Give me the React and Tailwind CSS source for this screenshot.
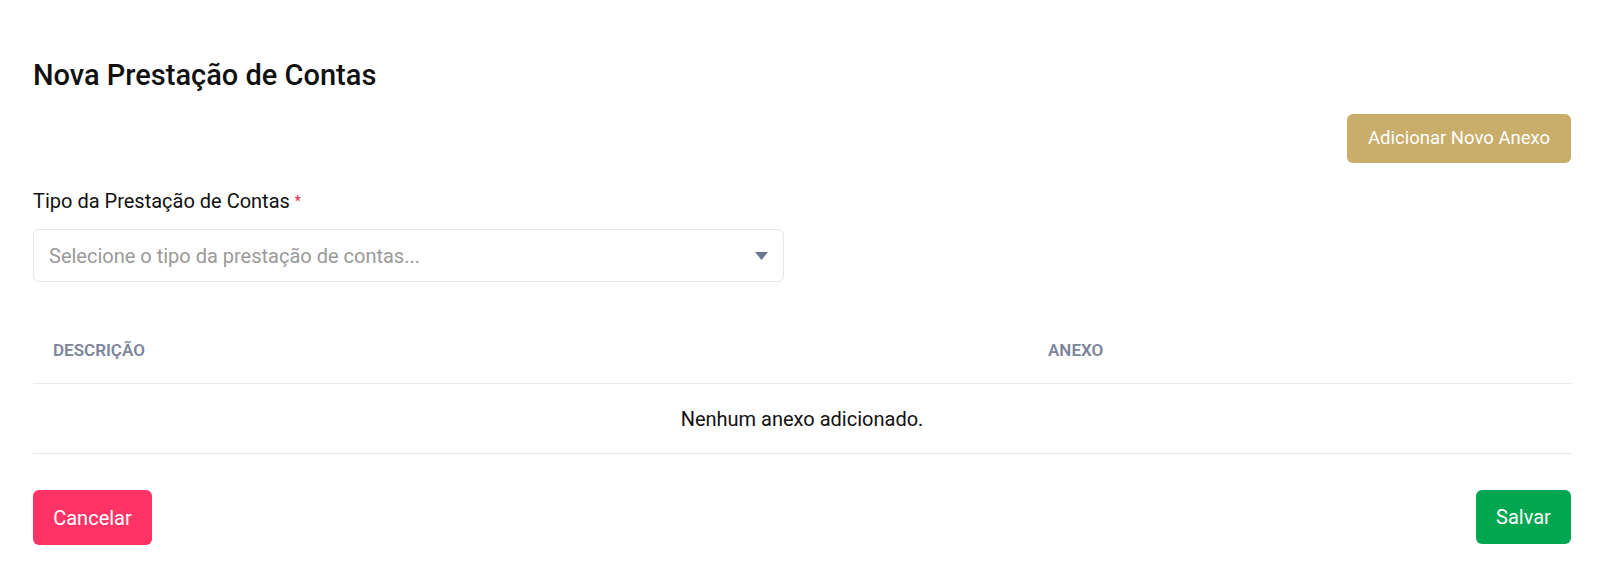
import { useState } from "react";

const NovaPrestacaoContas = () => {
  const [tipo, setTipo] = useState("");
  const [anexos] = useState([]);

  return (
    <div className="min-h-screen bg-white pl-[33px] pr-[29px] pt-[57px] font-['Roboto',sans-serif] text-[#111]">
      <h1 className="text-[29px] font-medium leading-[36px]">Nova Prestação de Contas</h1>

      <div className="mt-[21px] flex justify-end">
        <button className="h-[49px] w-[224px] rounded-md bg-[#c9ad6a] text-[18.5px] text-white">
          Adicionar Novo Anexo
        </button>
      </div>

      <div className="mt-[26px] w-[751px]">
        <label className="block text-[20px] leading-[24px]">
          Tipo da Prestação de Contas <span className="align-top text-[14px] text-[#e11d48]">*</span>
        </label>
        <div className="relative mt-[16px]">
          <select
            value={tipo}
            onChange={(e) => setTipo(e.target.value)}
            className="h-[53px] w-full appearance-none rounded-md border border-[#e3e6ea] bg-white pl-[15px] pr-10 text-[20px] text-[#9a9a9a] outline-none"
          >
            <option value="">Selecione o tipo da prestação de contas...</option>
          </select>
          <svg
            className="pointer-events-none absolute right-[16px] top-[23px]"
            width="13"
            height="8"
            viewBox="0 0 13 8"
          >
            <path d="M0 0h13L6.5 8z" fill="#6b7694" />
          </svg>
        </div>
      </div>

      <table className="mt-[35px] w-full border-collapse">
        <thead>
          <tr className="border-b border-[#e5e8ee]">
            <th className="w-[995px] py-[23px] pl-5 text-left text-[17px] font-semibold leading-[20px] text-[#7c859c]">
              DESCRIÇÃO
            </th>
            <th className="py-[23px] pl-5 text-left text-[17px] font-semibold leading-[20px] text-[#7c859c]">
              ANEXO
            </th>
          </tr>
        </thead>
        <tbody>
          {anexos.length === 0 && (
            <tr className="border-b border-[#e5e8ee]">
              <td colSpan={2} className="h-[70px] text-center text-[20px]">
                Nenhum anexo adicionado.
              </td>
            </tr>
          )}
        </tbody>
      </table>

      <div className="mt-[36px] flex justify-between">
        <button className="h-[55px] w-[119px] rounded-md bg-[#ff3366] text-[20px] text-white">Cancelar</button>
        <button className="h-[54px] w-[95px] rounded-md bg-[#00a650] text-[20px] text-white">Salvar</button>
      </div>
    </div>
  );
};

export default NovaPrestacaoContas;
